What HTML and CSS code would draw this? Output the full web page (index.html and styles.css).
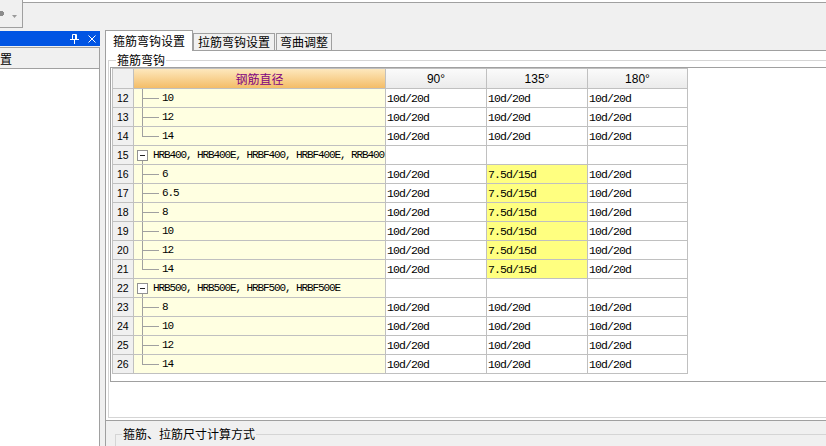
FILE: index.html
```html
<!DOCTYPE html>
<html lang="zh-CN">
<head>
<meta charset="utf-8">
<title>箍筋弯钩设置</title>
<link rel="stylesheet" href="styles.css">
</head>
<body>
<div class="app">
  <div class="toolbar">
    <div class="tb-box">
      <svg class="tb-icon" width="22" height="27" viewBox="0 0 22 27">
        <path d="M0 11h3v1h1v3h-1v1h-3z" fill="#8c8c8c"/>
        <path d="M12 15h5l-2.5 3z" fill="#9a9a9a"/>
      </svg>
    </div>
    <div class="tb-fill"></div>
  </div>
  <div class="workspace">
    <aside class="side">
      <div class="side-title">
        <svg width="9" height="10" viewBox="0 0 9 10"><path d="M2.5 0.5h4M2.5 0.5v5M5.5 0.5v5M6.5 0.5v5M0 5.5h9M4.5 6v4" stroke="#fff" fill="none"/></svg>
        <svg width="8" height="8" viewBox="0 0 8 8"><path d="M0.5 0.5l7 7M7.5 0.5l-7 7" stroke="#fff" fill="none"/></svg>
      </div>
      <div class="side-tab"><span>置</span></div>
      <div class="side-body"></div>
    </aside>
    <div class="splitter"></div>
    <main class="main">
      <div class="tabs">
        <div class="tab active">箍筋弯钩设置</div>
        <div class="tab">拉筋弯钩设置</div>
        <div class="tab third">弯曲调整</div>
      </div>
      <div class="body">
        <div class="page">
          <fieldset class="group">
            <legend>箍筋弯钩</legend>
            <div class="gridbox">
              <div class="grid">
                <div class="c hc"></div><div class="c hk">钢筋直径</div><div class="c hd">90°</div><div class="c hd">135°</div><div class="c hd">180°</div>

                <div class="c rn">12</div><div class="c tr ch">10</div><div class="c d">10d/20d</div><div class="c d">10d/20d</div><div class="c d">10d/20d</div>
                <div class="c rn">13</div><div class="c tr ch">12</div><div class="c d">10d/20d</div><div class="c d">10d/20d</div><div class="c d">10d/20d</div>
                <div class="c rn">14</div><div class="c tr chl">14</div><div class="c d">10d/20d</div><div class="c d">10d/20d</div><div class="c d">10d/20d</div>

                <div class="c rn">15</div><div class="c tr grp"><span class="tg"></span>HRB400, HRB400E, HRBF400, HRBF400E, RRB400</div><div class="c d"></div><div class="c d"></div><div class="c d"></div>
                <div class="c rn">16</div><div class="c tr ch">6</div><div class="c d">10d/20d</div><div class="c d y">7.5d/15d</div><div class="c d">10d/20d</div>
                <div class="c rn">17</div><div class="c tr ch">6.5</div><div class="c d">10d/20d</div><div class="c d y">7.5d/15d</div><div class="c d">10d/20d</div>
                <div class="c rn">18</div><div class="c tr ch">8</div><div class="c d">10d/20d</div><div class="c d y">7.5d/15d</div><div class="c d">10d/20d</div>
                <div class="c rn">19</div><div class="c tr ch">10</div><div class="c d">10d/20d</div><div class="c d y">7.5d/15d</div><div class="c d">10d/20d</div>
                <div class="c rn">20</div><div class="c tr ch">12</div><div class="c d">10d/20d</div><div class="c d y">7.5d/15d</div><div class="c d">10d/20d</div>
                <div class="c rn">21</div><div class="c tr chl">14</div><div class="c d">10d/20d</div><div class="c d y">7.5d/15d</div><div class="c d">10d/20d</div>

                <div class="c rn">22</div><div class="c tr grp"><span class="tg"></span>HRB500, HRB500E, HRBF500, HRBF500E</div><div class="c d"></div><div class="c d"></div><div class="c d"></div>
                <div class="c rn">23</div><div class="c tr ch">8</div><div class="c d">10d/20d</div><div class="c d">10d/20d</div><div class="c d">10d/20d</div>
                <div class="c rn">24</div><div class="c tr ch">10</div><div class="c d">10d/20d</div><div class="c d">10d/20d</div><div class="c d">10d/20d</div>
                <div class="c rn">25</div><div class="c tr ch">12</div><div class="c d">10d/20d</div><div class="c d">10d/20d</div><div class="c d">10d/20d</div>
                <div class="c rn">26</div><div class="c tr chl">14</div><div class="c d">10d/20d</div><div class="c d">10d/20d</div><div class="c d">10d/20d</div>
              </div>
            </div>
          </fieldset>
        </div>
        <div class="bottom">
          <fieldset class="group2">
            <legend>箍筋、拉筋尺寸计算方式</legend>
          </fieldset>
        </div>
      </div>
    </main>
  </div>
</div>
</body>
</html>
```

FILE: styles.css
```css
html, body {
  margin: 0;
  padding: 0;
  overflow: hidden;
}
body {
  width: 826px;
  height: 446px;
  background: #f0f0f0;
  font-family: "Noto Sans CJK SC", "Liberation Sans", sans-serif;
  font-size: 12px;
  color: #000;
}
.app {
  width: 900px;
  height: 446px;
  display: flex;
  flex-direction: column;
}

/* top toolbar */
.toolbar {
  height: 30px;
  flex: none;
  display: flex;
  background: linear-gradient(#ffffff 0 2px, #f0f0f0 2px);
}
.tb-box {
  width: 23px;
  height: 28px;
  box-sizing: border-box;
  background: #f0f0f0;
  border-right: 1px solid #a0a0a0;
  border-bottom: 1px solid #a0a0a0;
}
.tb-icon { display: block; }
.tb-fill {
  flex: 1;
  margin-top: 2px;
  border-top: 1px solid #a0a0a0;
}

/* workspace */
.workspace {
  flex: 1;
  display: flex;
  min-height: 0;
}
.side {
  width: 100px;
  flex: none;
  display: flex;
  flex-direction: column;
  padding-top: 1px;
}
.side-title {
  height: 15px;
  flex: none;
  background: #0054e3;
  display: flex;
  align-items: center;
  justify-content: flex-end;
  gap: 9px;
  padding-right: 4px;
}
.side-title svg { display: block; }
.side-tab {
  margin-top: 1px;
  height: 22px;
  flex: none;
  box-sizing: border-box;
  border-top: 1px solid #a0a0a0;
  border-bottom: 1px solid #a0a0a0;
  border-right: 1px solid #a0a0a0;
  background: #f0f0f0;
  display: flex;
  align-items: center;
  overflow: hidden;
  font-size: 12px;
}
.side-tab span { margin-left: 0; }
.side-body {
  flex: 1;
  background: #fff;
  border-right: 1px solid #a0a0a0;
}
.splitter {
  width: 5px;
  flex: none;
}

/* main */
.main {
  flex: 1;
  display: flex;
  flex-direction: column;
}
.tabs {
  height: 20px;
  flex: none;
  display: flex;
  align-items: flex-end;
}
.tab {
  box-sizing: border-box;
  height: 17px;
  line-height: 15px;
  padding: 0 4px;
  border: 1px solid #a0a0a0;
  border-bottom: none;
  background: #f0f0f0;
  white-space: nowrap;
}
.tab.active {
  height: 21px;
  line-height: 19px;
  margin-bottom: -1px;
  padding: 0 7px;
  background: #fff;
  position: relative;
  z-index: 1;
}
.tab.third {
  margin-left: 1px;
  padding: 0 3px;
}
.body {
  flex: 1;
  display: flex;
  flex-direction: column;
  border-left: 1px solid #a0a0a0;
}
.page {
  height: 371px;
  flex: none;
  box-sizing: border-box;
  background: #fff;
  border-top: 1px solid #a0a0a0;
  border-bottom: 1px solid #a0a0a0;
  padding: 2px 0 2px 2px;
}
.group, .group2 {
  margin: 0;
  padding: 0;
  min-width: 0;
  border: 1px solid #d5d5d5;
  border-right: none;
}
.group {
  height: 365px;
  box-sizing: border-box;
}
.group legend, .group2 legend {
  margin-left: 7px;
  padding: 0 1px;
  line-height: 14px;
  font-size: 12px;
}
.group2 legend { margin-left: 6px; }
.gridbox {
  margin-left: 1px;
  height: 315px;
  box-sizing: border-box;
  border: 1px solid #a0a0a0;
  border-right: none;
  padding-left: 1px;
  background: #fff;
}
.bottom {
  flex: 1;
  padding: 6px 0 0 9px;
}
.group2 {
  border-bottom: none;
  height: 40px;
}

/* grid */
.grid {
  display: grid;
  grid-template-columns: 21px 252px 101px 101px 100px;
  grid-template-rows: 20px;
  grid-auto-rows: 19px;
  width: max-content;
  border-left: 1px solid #c0c0c0;
  border-top: 1px solid #c0c0c0;
}
.c {
  box-sizing: border-box;
  border-right: 1px solid #c0c0c0;
  border-bottom: 1px solid #c0c0c0;
  display: flex;
  align-items: center;
  white-space: nowrap;
  overflow: hidden;
}
.hc { background: #f0f0f0; }
.hk {
  justify-content: center;
  color: #800080;
  background: linear-gradient(#fde8bd, #f4bd68);
}
.hd {
  justify-content: center;
  font-family: "Liberation Sans", sans-serif;
  font-size: 12px;
  background: linear-gradient(#fbfbfb, #ebebeb);
}
.rn {
  background: #f0f0f0;
  padding-left: 4px;
  font-family: "Liberation Sans", sans-serif;
  font-size: 10.5px;
}
.d {
  background: #fff;
  padding-left: 1px;
  font-family: "Liberation Mono", monospace;
  font-size: 11.5px;
  letter-spacing: -0.9px;
}
.d.y { background: #ffff80; }
.tr {
  background-color: #ffffe1;
  font-family: "Liberation Mono", monospace;
  font-size: 11px;
  letter-spacing: -1.1px;
}
.ch, .chl { padding-left: 28px; }
.ch {
  background:
    linear-gradient(#a0a0a0, #a0a0a0) 8px 0 / 1px 100% no-repeat,
    linear-gradient(#a0a0a0, #a0a0a0) 8px 9px / 17px 1px no-repeat,
    #ffffe1;
}
.chl {
  background:
    linear-gradient(#a0a0a0, #a0a0a0) 8px 0 / 1px 10px no-repeat,
    linear-gradient(#a0a0a0, #a0a0a0) 8px 9px / 17px 1px no-repeat,
    #ffffe1;
}
.grp {
  background:
    linear-gradient(#a0a0a0, #a0a0a0) 8px 14px / 1px 100% no-repeat,
    #ffffe1;
}
.tg {
  width: 11px;
  height: 11px;
  flex: none;
  box-sizing: border-box;
  margin: 0 5px 0 3px;
  border: 1px solid #929292;
  background: linear-gradient(#222, #222) center / 5px 1px no-repeat, #fff;
}
```
